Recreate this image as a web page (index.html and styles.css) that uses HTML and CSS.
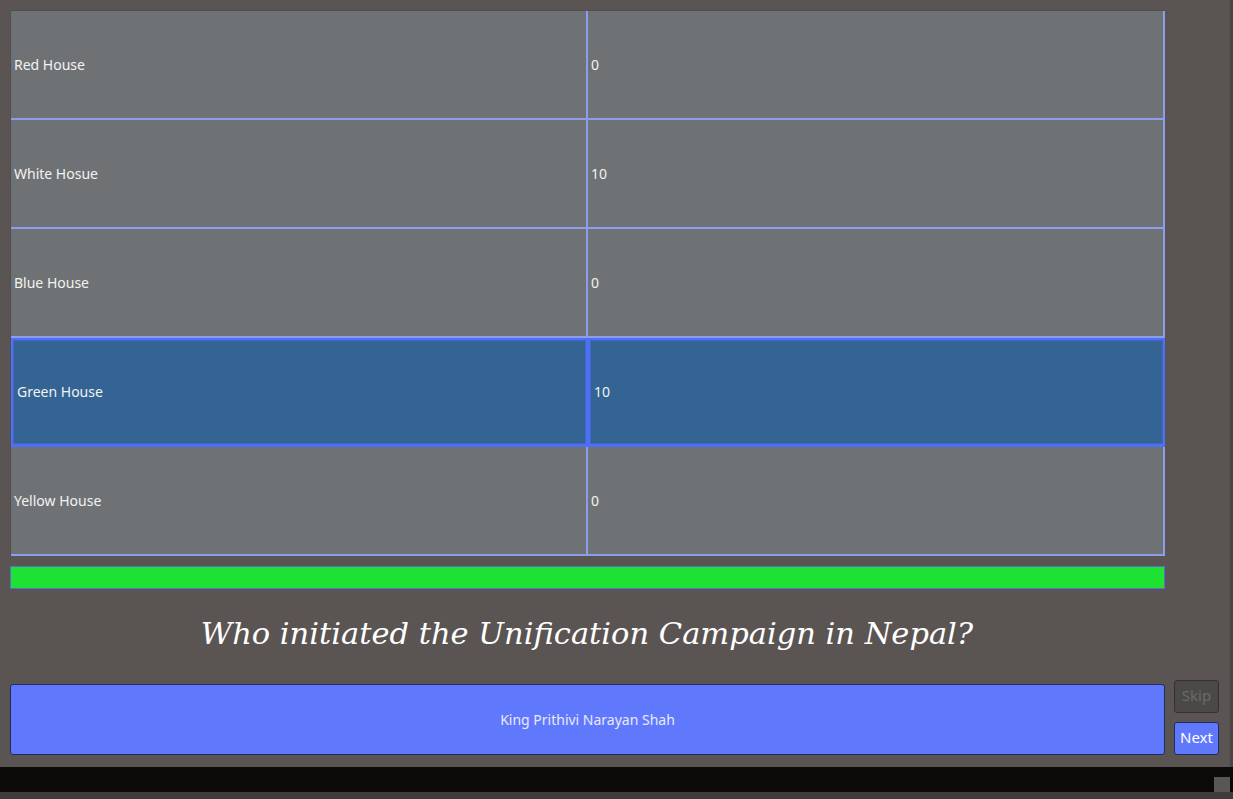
FILE: index.html
```html
<!DOCTYPE html>
<html>
<head>
<meta charset="utf-8">
<link rel="stylesheet" href="styles.css">
</head>
<body>
<div class="app">
  <div class="main">
    <div class="table">
      <div class="row"><div class="cell">Red House</div><div class="cell">0</div></div>
      <div class="row"><div class="cell">White Hosue</div><div class="cell">10</div></div>
      <div class="row"><div class="cell">Blue House</div><div class="cell">0</div></div>
      <div class="row selected"><div class="cell">Green House</div><div class="cell">10</div></div>
      <div class="row"><div class="cell">Yellow House</div><div class="cell">0</div></div>
    </div>
    <div class="progress"></div>
    <div class="question">Who initiated the Unification Campaign in Nepal?</div>
    <div class="answer-row">
      <button class="answer">King Prithivi Narayan Shah</button>
      <div class="side">
        <button class="btn skip">Skip</button>
        <button class="btn next">Next</button>
      </div>
    </div>
  </div>
  <div class="edge"></div>
</div>
<div class="footer"><div class="grip"></div></div>
<div class="under"></div>
</body>
</html>
```
FILE: styles.css
```css
html, body {
  margin: 0;
  padding: 0;
  background: #5a5553;
  font-family: "Noto Sans", "Open Sans", sans-serif;
  overflow: hidden;
}
.app {
  display: flex;
  height: 767px;
}
.main {
  width: 1230px;
  box-sizing: border-box;
  padding: 10px 0 0 10px;
  display: flex;
  flex-direction: column;
}
.edge {
  width: 3px;
  background: #4a4645;
}
.table {
  width: 1155px;
  box-sizing: border-box;
  background: #6f7275;
  border-top: 1px solid #4e5054;
  border-left: 1px solid #4e5054;
  display: flex;
  flex-direction: column;
}
.row {
  display: grid;
  grid-template-columns: 577px 577px;
  height: 109px;
}
.cell {
  box-sizing: border-box;
  border-right: 2px solid #8e9cee;
  border-bottom: 2px solid #8e9cee;
  padding-left: 3px;
  padding-bottom: 1px;
  display: flex;
  align-items: center;
  color: #f2f2f2;
  font-size: 14px;
}
.row.selected {
  background: #336494;
}
.row.selected .cell {
  border: 2px solid #4f6ff4;
  border-bottom-width: 3px;
  padding-left: 4px;
  box-shadow: inset 0 0 0 1px #3f66c8;
}
.progress {
  margin-top: 10px;
  width: 1155px;
  height: 23px;
  box-sizing: border-box;
  background: #1de234;
  border: 1px solid #5a6cd0;
}
.question {
  width: 1154px;
  height: 95px;
  box-sizing: border-box;
  padding-bottom: 6px;
  display: flex;
  align-items: center;
  justify-content: center;
  font-family: "DejaVu Serif", serif;
  font-style: italic;
  font-size: 30.5px;
  color: #ffffff;
}
.answer-row {
  display: flex;
  gap: 9px;
  margin-top: -4px;
}
.answer {
  margin-top: 4px;
  width: 1155px;
  height: 71px;
  background: #6079fc;
  border: 1px solid #1f2c62;
  border-radius: 3px;
  color: #e8eaf8;
  font-family: "Noto Sans", "Open Sans", sans-serif;
  font-size: 14px;
  padding: 0;
}
.side {
  display: flex;
  flex-direction: column;
  gap: 9px;
}
.btn {
  width: 45px;
  height: 33px;
  border-radius: 3px;
  font-family: "Noto Sans", "Open Sans", sans-serif;
  font-size: 15px;
  padding: 0 0 3px 0;
}
.skip {
  background: #4b4948;
  border: 1px solid #343231;
  color: #6c6a69;
}
.next {
  background: #6079fc;
  border: 1px solid #1f2c62;
  color: #ffffff;
}
.footer {
  height: 25px;
  background: #0b0a09;
  display: flex;
  justify-content: flex-end;
  align-items: flex-end;
  padding-right: 3px;
}
.grip {
  width: 16px;
  height: 15px;
  background: #5a5654;
}
.under {
  height: 7px;
  background: #3e3b3a;
}
```
